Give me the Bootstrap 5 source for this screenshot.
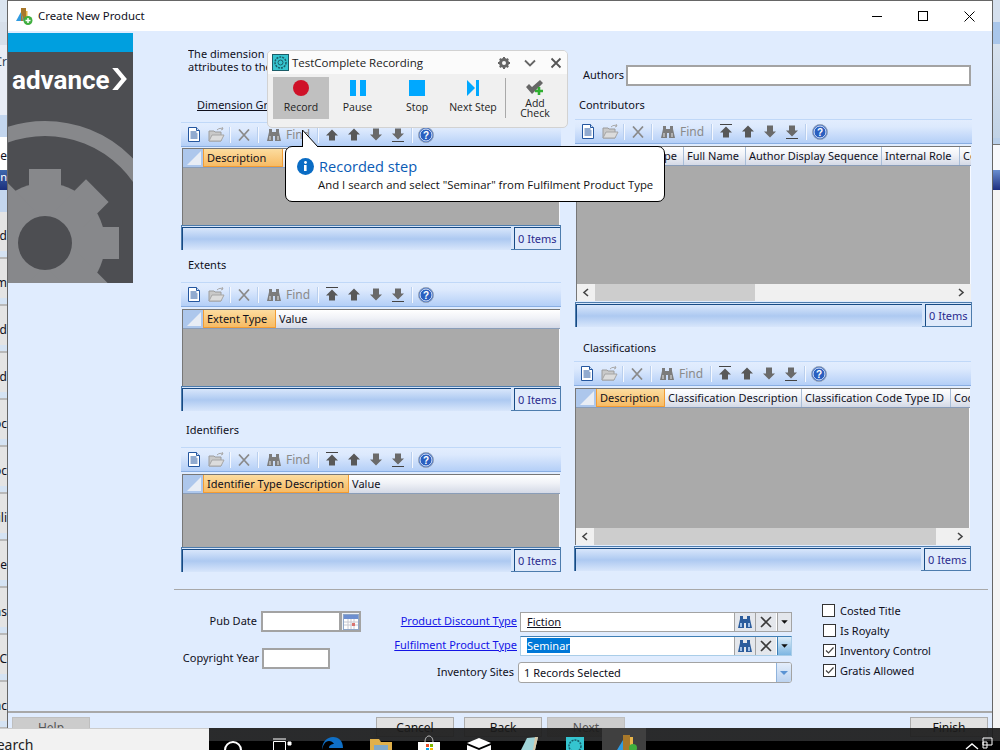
<!DOCTYPE html>
<html lang="en">
<head>
    <meta charset="UTF-8">
    <title>Create New Product</title>
    <link href="https://cdn.jsdelivr.net/npm/bootstrap@5.3.0/dist/css/bootstrap.min.css" rel="stylesheet">
    <style>
        html, body { height: 100%; }
        body {
            width: 1000px; height: 750px; overflow: hidden; position: relative;
            background: #f0f0f0; color: #10101c;
            font-family: "Noto Sans", "Liberation Sans", sans-serif; font-size: 11px; line-height: 13px;
        }
        .desk { height: 750px; }
        /* background app peeking out either side */
        .strip-l { width: 7px; flex: none; overflow: hidden; background: #e4e4e4; }
        .strip-l .sl { height: 47px; border-bottom: 2px solid #b9b9b9; box-shadow: inset 0 -6px 0 #d5e3f3; white-space: nowrap; font-size: 12px; direction: rtl; padding-top: 17px; }
        .strip-l .sl-top { height: 22px; background: #dbe5f0; }
        .strip-l .sl-a { height: 23px; background: #d6dfea; }
        .strip-l .sl-b { height: 70px; background: #e9edf5; padding-top: 10px; font-size: 12px; color: #345; direction: rtl; white-space: nowrap; }
        .strip-l .sl-c { height: 22px; background: #c3d6ee; }
        .strip-l .sl-d { height: 33px; background: #fff; direction: rtl; white-space: nowrap; padding-top: 12px; font-size: 12px; }
        .strip-l .sl-e { height: 20px; background: linear-gradient(#3f68ad, #1b2f7c); color: #fff; direction: rtl; white-space: nowrap; }
        .strip-r { width: 7px; flex: none; background: #f4f4f4; }
        .strip-r .sr1 { height: 22px; background: #d5e0ee; }
        .strip-r .sr2 { height: 22px; background: #a9c6ea; }
        .strip-r .sr3 { height: 94px; background: linear-gradient(#d8e2ee, #c2d3e6); }
        .strip-r .sr4 { height: 7px; background: #b9cfe9; border-bottom: 1px solid #777; }
        .strip-r .sr5 { height: 25px; background: #f8f9fc; }
        .strip-r .sr6 { height: 20px; background: linear-gradient(#6a8fd0, #1e2f80); }

        .win { width: 986px; flex: none; background: #e0ecfe; border: 1px solid #666; border-width: 1px 1px 0 1px; height: 760px; }
        .win-title { height: 30px; background: #fff; font-size: 11.4px; }
        .win-title .wt { margin-left: 5px; margin-top: -2px; }
        .win-icon { margin-left: 8px; }
        .wbtn { width: 46px; height: 30px; }
        .win-body { height: 680px; }

        .brand { width: 125px; height: 250px; margin-top: 2px; background: #4d4e52; flex: none; }
        .brand-top { height: 19px; background: #009fdf; }
        .brand-main { height: 231px; position: relative; overflow: hidden; }
        .brand-art { position: absolute; left: 0; top: 0; }
        .brand-name { position: absolute; left: 4px; top: 14px; color: #fff; font: 700 26px/28px "Roboto", "Liberation Sans", sans-serif; }
        .brand-arrow { position: absolute; left: 104px; top: 16px; }

        .main-area { width: 855px; padding-left: 41px; flex: none; }
        .cols { height: 558px; }
        .col-left { width: 380px; margin-left: 7px; flex: none; }
        .col-right { width: 397px; margin-left: 14px; flex: none; }
        .info-text { padding-top: 16px; margin-left: 7px; width: 370px; white-space: nowrap; overflow: hidden; }
        .dim-link { margin-top: 25px; margin-left: 16px; text-decoration: underline; }
        .lab { height: 13px; }
        .lab-contrib { margin-left: 4px; margin-top: 12px; }
        .lab-ext { margin-left: 7px; margin-top: 8px; }
        .lab-ident { margin-left: 5px; margin-top: 12px; }
        .lab-class { margin-left: 8px; margin-top: 14px; }
        .gap-t11 { margin-top: 11px; }
        .gap-t8 { margin-top: 8px; }
        .gap-t7 { margin-top: 7px; }
        .wide-top .gframe { margin-top: 2px; }
        .auth-row { padding-top: 34px; margin-left: 8px; }
        .auth-lab { padding-bottom: 2px; }
        .auth-row input { width: 345px; margin-left: 2px; }
        .plain-in { height: 21px; border: 2px solid #a3a3a3; background: #fff; display: block; padding: 0; }
        .shift-l { margin-left: -1px; margin-right: 1px; }

        /* grid panel */
        .gtool { height: 25px; background: linear-gradient(#e2edfe, #dce9fd 30%, #b4cff7); border-top: 1px solid #c0d8f8; border-bottom: 1px solid #89aee2; color: #888; font-size: 12px; }
        .gtool svg { display: block; flex: none; }
        .gtool .tsep { width: 1px; height: 16px; background: #f4f8ff; box-shadow: -1px 0 0 #b9cfee; flex: none; }
        .gtool .tfind { width: 26px; margin-left: 5px; flex: none; color: #8a8a8a; }
        .mg5 { margin-left: 5px; } .mg7 { margin-left: 7px; } .mg8 { margin-left: 8px; } .mg10 { margin-left: 10px; } .mg6 { margin-left: 6px; }
        .gframe { margin: 1px 1px 0; border-left: 1px solid #777; }
        .ghead { height: 20px; background: linear-gradient(#fff, #f0f2f7 45%, #d4d9e6); border-top: 1px solid #777; border-bottom: 1px solid #8a9db8; overflow: hidden; }
        .gcorner { width: 20px; flex: none; background: #adc7ec; position: relative; }
        .gcorner::after { content: ""; position: absolute; right: 2px; bottom: 2px; border-style: solid; border-width: 0 0 14px 14px; border-color: transparent transparent #e8edf5 transparent; }
        .gcol { flex: none; padding-left: 3px; line-height: 18px; border-right: 1px solid #a9bed8; white-space: nowrap; overflow: hidden; }
        .gcol-on { background: linear-gradient(#fcdc9f, #f7bb64); border: 1px solid #f29c33; border-top: 0; line-height: 17px; }
        .gcol-last { border-right: 0; }
        .gempty { background: #aaaaaa; border-right: 1px solid #f6f9ff; }
        .gs { height: 17px; background: #f0f0f0; padding: 0 3px; margin-bottom: 1px; }
        .gs-thumb { background: #cdcdcd; height: 100%; }
        .gs-a { width: 15px; flex: none; }
        .h-57 { height: 57px; } .h-53 { height: 53px; } .h-118 { height: 118px; } .h-120 { height: 120px; }
        .gstatus { height: 25px; border: 1px solid #4d7cad; background: #d6e5fa; }
        .gs-main { flex: 1; background: linear-gradient(#d8e6fb, #adc9f1 50%, #d8e6fb); border-top: 1px solid #174a84; border-left: 1px solid #174a84; margin-top: 1px; margin-bottom: -1px; }
        .gs-items { width: 46px; margin-left: 3px; flex: none; background: #dfeafb; border-top: 1px solid #174a84; border-left: 1px solid #174a84; margin-top: 1px; padding-left: 3px; color: #2b2a8e; line-height: 21px; }
        .w-c1 { width: 69px; } .w-c2 { width: 137px; } .w-c3 { width: 149px; }
        .w-p { width: 87px; text-align: right; padding-right: 6px; } .w-f { width: 62px; } .w-a { width: 136px; } .w-r { width: 78px; }
        .w-ext { width: 73px; } .w-id { width: 146px; } .w-d { width: 80px; }

        /* lower form */
        .form-area { border-top: 1px solid #a8a8a8; height: 122px; }
        .fleft { width: 187px; flex: none; }
        .fmid { width: 432px; flex: none; }
        .fr1 { margin-top: 21px; }
        .fr2 { margin-top: 16px; }
        .flab { width: 83px; text-align: right; flex: none; padding-bottom: 2px; }
        .flab2 { width: 85px; }
        .fin1 { width: 80px; margin-left: 4px; }
        .fin2 { width: 68px; margin-left: 3px; }
        .fcal { width: 20px; height: 21px; border: 2px solid #a3a3a3; border-left-width: 1px; background: #eef2f8; padding: 1px; }
        .mlab { width: 156px; text-align: right; flex: none; padding-bottom: 3px; }
        .mlab3 { width: 153px; }
        .mlink { color: #1414e6; text-decoration: underline; }
        .mrow1 { margin-top: 22px; height: 20px; }
        .mrow2 { margin-top: 4px; height: 20px; }
        .mrow3 { margin-top: 6px; height: 21px; }
        .lookup { width: 272px; margin-left: 3px; height: 20px; border: 1px solid #a3a3a3; background: #fff; flex: none; }
        .lookup-on { border-color: #a9cde8; border-top-color: #3f7fb5; }
        .lk-text { flex: 1; padding-left: 6px; line-height: 18px; }
        .lk-u { text-decoration: underline; }
        .lk-sel { background: #0078d7; color: #fff; }
        .lk-btn { width: 21px; flex: none; background: #e4e7ec; border-left: 1px solid #a3a3a3; }
        .lk-btn-d { width: 14px; margin-left: 1px; }
        .lk-btn-on { background: linear-gradient(#dcecf8, #7db6e2); border-left-color: #3f7fb5; }
        .sites { width: 274px; margin-left: 4px; height: 21px; background: #fff; border: 1px solid #a3a3a3; border-radius: 3px; overflow: hidden; flex: none; }
        .sites-t { flex: 1; padding-left: 5px; line-height: 19px; }
        .sites-b { width: 15px; background: linear-gradient(#e4eefb, #bcd3f0); border-left: 1px solid #8fb3dc; }
        .fchecks { margin-left: 29px; margin-top: 10px; }
        .chk-row { height: 20px; }
        .chk-row .form-check-input { width: 13px; height: 13px; margin: 0 5px 0 0; border: 1px solid #333; border-radius: 0; box-shadow: none; flex: none; }
        .chk-row .form-check-input:checked { background-color: #fff; border-color: #333; background-size: 11px 11px; background-image: url("data:image/svg+xml,%3csvg xmlns='http://www.w3.org/2000/svg' viewBox='0 0 11 11'%3e%3cpath d='M2 5.5l2.5 2.5L9.5 2.5' fill='none' stroke='%23444' stroke-width='1.2'/%3e%3c/svg%3e"); }
        .chk-in { margin-left: 1px; }
        .chk-in .form-check-input { margin-right: 4px; }

        .win-foot { border-top: 2px solid #a8a8a8; padding: 4px 4px 0; height: 40px; }
        .btn.wiz { width: 78px; height: 20px; padding: 0; font-size: 12px; line-height: 17px; border-radius: 0; background: #e1e1e1; border: 1px solid #adadad; color: #111; }
        .btn.wiz-off { background: #cccccc; color: #555; border-color: #bfbfbf; opacity: 1; }
        .mg286 { margin-left: 286px; }

        /* recorder */
        .recorder { position: absolute; left: 267px; top: 50px; width: 301px; height: 78px; background: #f0f0f0; border: 1px solid #d2d2d2; border-radius: 5px; font-family: "Open Sans", "Noto Sans", sans-serif; overflow: hidden; }
        .rec-title { height: 23px; background: #fbfbfb; font-size: 11.5px; color: #222; padding-left: 4px; }
        .rec-title span { margin-left: 3px; margin-top: -1px; }
        .rec-ctl { margin-right: 5px; margin-left: 9px; }
        .rec-tools { padding: 3px 0 0 5px; font-size: 10.5px; color: #222; }
        .rec-b { width: 56px; height: 42px; text-align: center; padding-top: 3px; flex: none; }
        .rec-b svg { display: block; margin: 0 auto 5px; }
        .rec-on { background: #c0c0c0; }
        .rec-w57 { width: 57px; }
        .rec-stop { margin-left: 3px; }
        .rec-sep { width: 1px; height: 40px; margin: 1px 0 0 4px; background: #a9a9a9; flex: none; }
        .rec-add { width: 58px; line-height: 10px; }
        .rec-b.rec-add svg { margin-bottom: 1px; }
        .callout { position: absolute; left: 285px; top: 146px; width: 380px; height: 56px; background: #fff; border: 1px solid #000; border-radius: 7px; font-family: "Open Sans", "Noto Sans", sans-serif; padding: 10px 0 0 11px; }
        .call-tail { position: absolute; left: 15px; top: -18px; }
        .call-h { font-size: 14.6px; line-height: 20px; color: #0a5bb5; margin-left: 5px; margin-top: -1px; }
        .call-t { font-size: 11.35px; line-height: 15px; margin: 1px 0 0 21px; color: #111; white-space: nowrap; }

        /* taskbar */
        .taskbar { position: absolute; left: 0; right: 0; top: 728px; height: 22px; background: linear-gradient(rgba(28,28,28,.93) 13px, #000 13px); overflow: hidden; }
        .tsearch { width: 209px; flex: none; background: #f2f2f2; border-top: 1px solid #ccc; color: #222; font-size: 14px; line-height: 20px; padding-top: 6px; }
        .tsearch span { margin-left: -11px; display: block; }
        .tcell { width: 48px; flex: none; display: block; }
        .tcell-on { width: 44px; margin-left: 9px; background: #404040; }
        .ttray { margin-left: auto; margin-right: 6px; }
    </style>
</head>
<body>
    <svg width="0" height="0" class="position-absolute">
        <symbol id="i-doc" viewBox="0 0 12 15"><path d="M.5.5h8l3 3v11H.5z" fill="#fff" stroke="#24569f"/><path d="M8.5.5v3h3" fill="#cfe0f7" stroke="#24569f"/><path d="M2.5 5h6M2.5 7h7M2.5 9h7M2.5 11h7" stroke="#24569f"/></symbol>
        <symbol id="i-open" viewBox="0 0 17 15"><path d="M1 14V4h5l1 1h6v9z" fill="#c9c9c9" stroke="#9c9c9c"/><path d="M1 14l3-6h12l-3 6z" fill="#dcdcdc" stroke="#a6a6a6"/><path d="M9 3c2-2 4-2 6-1l-1-2M15 2l-2 1" fill="none" stroke="#a8a8a8"/></symbol>
        <symbol id="i-x" viewBox="0 0 12 12"><path d="M1 .5l10 11M11 .5L1 11.5" stroke="#8a8a8a" stroke-width="1.7"/></symbol>
        <symbol id="i-bin" viewBox="0 0 14 14"><path d="M2 1h3v3h4V1h3v3l2 9H8V8H6v5H0l2-9z" fill="#7c7c7c"/><path d="M2 8h2v4H2zM10 8h2v4h-2z" fill="#b0b0b0"/></symbol>
        <symbol id="i-top" viewBox="0 0 12 15"><path d="M0 .5h12" stroke="#444"/><path d="M6 2.5l6 6H9v5H3v-5H0z" fill="#585858"/></symbol>
        <symbol id="i-up" viewBox="0 0 12 15"><path d="M6 1.5l6 6H9v6H3v-6H0z" fill="#585858"/></symbol>
        <symbol id="i-dn" viewBox="0 0 12 15"><path d="M6 13.5l6-6H9v-6H3v6H0z" fill="#6a6a6a"/></symbol>
        <symbol id="i-bot" viewBox="0 0 12 15"><path d="M0 14.5h12" stroke="#444"/><path d="M6 12.5l6-6H9v-5H3v5H0z" fill="#6a6a6a"/></symbol>
        <symbol id="i-bin-b" viewBox="0 0 14 14"><path d="M2 1h3v3h4V1h3v3l2 9H8V8H6v5H0l2-9z" fill="#2b5c9c"/><path d="M2 8h2v4H2zM10 8h2v4h-2z" fill="#9fc0e8"/></symbol>
        <symbol id="i-lkx" viewBox="0 0 12 12"><path d="M1 1l10 10M11 1L1 11" stroke="#3a3a3a" stroke-width="1.6"/></symbol>
        <symbol id="i-drop" viewBox="0 0 14 18"><path d="M3.5 7h7L7 11z" fill="#111"/></symbol>
        <symbol id="i-app" viewBox="0 0 17 17"><path d="M0 13L5 4v9z" fill="#2f9be0"/><path d="M5 0h5v13H5z" fill="#a8782a"/><path d="M10 3h1.5v10H10z" fill="#e8b54a"/><path d="M7 13L5 4l3 9z" fill="#4fb4ee"/><circle cx="12" cy="12.5" r="4.5" fill="#3fae3f"/><path d="M12 10v5M9.5 12.5h5" stroke="#fff" stroke-width="1.5"/></symbol>
        <symbol id="i-tc" viewBox="0 0 17 17"><rect x=".5" y=".5" width="16" height="16" fill="#35c4cf" stroke="#1b5d68"/><circle cx="8.5" cy="8.5" r="5.5" fill="none" stroke="#1b5d68" stroke-width="1.5" stroke-dasharray="2 1"/><circle cx="8.5" cy="8.5" r="2.5" fill="none" stroke="#1b5d68"/></symbol>
    </svg>

    <div class="desk d-flex">
        <div class="strip-l">
            <div class="sl-top"></div>
            <div class="sl-a"></div>
            <div class="sl-b">Cr</div>
            <div class="sl-c"></div>
            <div class="sl-d">ne</div>
            <div class="sl-e">an</div>
            <div class="sl-c"></div>
            <div class="sl">d</div>
            <div class="sl">m</div>
            <div class="sl">d</div>
            <div class="sl">rd</div>
            <div class="sl">oc</div>
            <div class="sl">oc</div>
            <div class="sl">ili</div>
            <div class="sl">de</div>
            <div class="sl">ns</div>
            <div class="sl">C</div>
            <div class="sl">ac</div>
        </div>

        <div class="win">
            <div class="win-title d-flex align-items-center">
                <svg class="win-icon" width="17" height="17"><use href="#i-app"/></svg>
                <span class="wt">Create New Product</span>
                <div class="ms-auto d-flex">
                    <div class="wbtn d-flex align-items-center justify-content-center"><svg width="10" height="10"><path d="M0 5.5h10" stroke="#000"/></svg></div>
                    <div class="wbtn d-flex align-items-center justify-content-center"><svg width="10" height="10"><rect x=".5" y=".5" width="9" height="9" fill="none" stroke="#000"/></svg></div>
                    <div class="wbtn d-flex align-items-center justify-content-center"><svg width="11" height="11"><path d="M.5.5l10 10M10.5.5l-10 10" stroke="#000"/></svg></div>
                </div>
            </div>

            <div class="win-body d-flex">
                <div class="brand">
                    <div class="brand-top"></div>
                    <div class="brand-main">
                        <svg class="brand-art" width="125" height="231" viewBox="0 0 125 231">
                            <circle cx="37" cy="191" r="114.5" fill="none" stroke="#87888b" stroke-width="15"/>
                            <g fill="#87888b">
                                <circle cx="37" cy="191" r="60"/>
                                <rect x="21" y="117" width="32" height="148"/>
                                <rect x="21" y="117" width="32" height="148" transform="rotate(45 37 191)"/>
                                <rect x="21" y="117" width="32" height="148" transform="rotate(90 37 191)"/>
                                <rect x="21" y="117" width="32" height="148" transform="rotate(135 37 191)"/>
                            </g>
                            <circle cx="37" cy="191" r="27" fill="#4d4e52"/>
                        </svg>
                        <div class="brand-name">advance</div>
                        <svg class="brand-arrow" width="16" height="22" viewBox="0 0 17 24"><path d="M0 0h6l10 12L6 24H0l10-12z" fill="#fff"/></svg>
                    </div>
                </div>

                <div class="main-area">
                    <div class="cols d-flex">
                        <div class="col-left">
                            <div class="info-text">The dimension groups and lists are used to add values of the<br>attributes to the selected product record for this title</div>
                            <div class="dim-link lab">Dimension Groups</div>
                            <div class="gpanel gap-t11" data-cols="Description:w-d:on|:flex-fill gcol-last" data-h="h-57"></div>
                            <div class="lab lab-ext">Extents</div>
                            <div class="gpanel gap-t11 wide-top" data-cols="Extent Type:w-ext:on|Value:flex-fill gcol-last" data-h="h-57"></div>
                            <div class="lab lab-ident">Identifiers</div>
                            <div class="gpanel gap-t11 wide-top" data-cols="Identifier Type Description:w-id:on|Value:flex-fill gcol-last" data-h="h-53"></div>
                        </div>
                        <div class="col-right">
                            <div class="auth-row d-flex align-items-center"><span class="auth-lab">Authors</span> <input class="plain-in" type="text"></div>
                            <div class="lab lab-contrib">Contributors</div>
                            <div class="gpanel gap-t8 wide-top" data-cols="Contrib Type:w-p|Full Name:w-f|Author Display Sequence:w-a|Internal Role:w-r|Code:flex-fill gcol-last" data-h="h-118" data-scroll="160"></div>
                            <div class="lab lab-class">Classifications</div>
                            <div class="gpanel gap-t7 wide-top shift-l" data-cols="Description:w-c1:on|Classification Description:w-c2|Classification Code Type ID:w-c3|Code:flex-fill gcol-last" data-h="h-120" data-scroll="342"></div>
                        </div>
                    </div>

                    <div class="form-area d-flex">
                        <div class="fleft">
                            <div class="fr1 d-flex align-items-center">
                                <div class="flab">Pub Date</div>
                                <input class="plain-in fin1" type="text">
                                <div class="fcal">
                                    <svg width="16" height="16" viewBox="0 0 16 16"><rect x=".5" y=".5" width="15" height="15" fill="#fff" stroke="#8ea6c8"/><rect x="1" y="1" width="14" height="4" fill="#6d8fd0"/><path d="M1 8h14M1 11h14M5 5v10M8 5v10M11 5v10" stroke="#c8c8d0"/><rect x="9" y="9" width="3" height="3" fill="#d9736f"/></svg>
                                </div>
                            </div>
                            <div class="fr2 d-flex align-items-center">
                                <div class="flab flab2">Copyright Year</div>
                                <input class="plain-in fin2" type="text">
                            </div>
                        </div>
                        <div class="fmid">
                            <div class="mrow1 d-flex align-items-center">
                                <div class="mlab mlink">Product Discount Type</div>
                                <div class="lookup d-flex">
                                    <div class="lk-text"><span class="lk-u">Fiction</span></div>
                                    <div class="lk-btn d-flex align-items-center justify-content-center"><svg width="14" height="14"><use href="#i-bin-b"/></svg></div>
                                    <div class="lk-btn d-flex align-items-center justify-content-center"><svg width="12" height="12"><use href="#i-lkx"/></svg></div>
                                    <div class="lk-btn lk-btn-d"><svg width="13" height="18" class="d-block"><use href="#i-drop"/></svg></div>
                                </div>
                            </div>
                            <div class="mrow2 d-flex align-items-center">
                                <div class="mlab mlink">Fulfilment Product Type</div>
                                <div class="lookup lookup-on d-flex">
                                    <div class="lk-text"><span class="lk-sel">Seminar</span></div>
                                    <div class="lk-btn d-flex align-items-center justify-content-center"><svg width="14" height="14"><use href="#i-bin-b"/></svg></div>
                                    <div class="lk-btn d-flex align-items-center justify-content-center"><svg width="12" height="12"><use href="#i-lkx"/></svg></div>
                                    <div class="lk-btn lk-btn-d lk-btn-on"><svg width="13" height="18" class="d-block"><use href="#i-drop"/></svg></div>
                                </div>
                            </div>
                            <div class="mrow3 d-flex align-items-center">
                                <div class="mlab mlab3">Inventory Sites</div>
                                <div class="sites d-flex">
                                    <div class="sites-t">1 Records Selected</div>
                                    <div class="sites-b d-flex align-items-center justify-content-center"><svg width="10" height="6"><path d="M1 1h8L5 5z" fill="#5b93d3"/></svg></div>
                                </div>
                            </div>
                        </div>
                        <div class="fchecks">
                            <div class="chk-row d-flex align-items-center"><input class="form-check-input" type="checkbox"><span>Costed Title</span></div>
                            <div class="chk-row d-flex align-items-center chk-in"><input class="form-check-input" type="checkbox"><span>Is Royalty</span></div>
                            <div class="chk-row d-flex align-items-center chk-in"><input class="form-check-input" type="checkbox" checked><span>Inventory Control</span></div>
                            <div class="chk-row d-flex align-items-center chk-in"><input class="form-check-input" type="checkbox" checked><span>Gratis Allowed</span></div>
                        </div>
                    </div>
                </div>
            </div>

            <div class="win-foot d-flex">
                <button class="btn wiz wiz-off" type="button">Help</button>
                <button class="btn wiz mg286" type="button">Cancel</button>
                <button class="btn wiz mg10" type="button">Back</button>
                <button class="btn wiz wiz-off mg5" type="button">Next</button>
                <button class="btn wiz ms-auto" type="button">Finish</button>
            </div>
        </div>

        <div class="strip-r">
            <div class="sr1"></div><div class="sr2"></div><div class="sr3"></div><div class="sr4"></div><div class="sr5"></div><div class="sr6"></div>
        </div>
    </div>

    <!-- TestComplete recorder floats over the dialog -->
    <div class="recorder">
        <div class="rec-title d-flex align-items-center">
            <svg width="17" height="17"><use href="#i-tc"/></svg>
            <span>TestComplete Recording</span>
            <div class="ms-auto d-flex align-items-center">
                <svg class="rec-ctl" width="12" height="12" viewBox="0 0 12 12"><circle cx="6" cy="6" r="3.5" fill="none" stroke="#666" stroke-width="3"/><path d="M6 0v2M6 10v2M0 6h2M10 6h2M1.8 1.8l1.4 1.4M8.8 8.8l1.4 1.4M1.8 10.2l1.4-1.4M8.8 3.2l1.4-1.4" stroke="#666" stroke-width="2"/></svg>
                <svg class="rec-ctl" width="12" height="12" viewBox="0 0 12 12"><path d="M1 3.5l5 5 5-5" fill="none" stroke="#666" stroke-width="1.8"/></svg>
                <svg class="rec-ctl" width="12" height="12" viewBox="0 0 12 12"><path d="M1.5 1.5l9 9M10.5 1.5l-9 9" stroke="#555" stroke-width="1.8"/></svg>
            </div>
        </div>
        <div class="rec-tools d-flex">
            <div class="rec-b rec-on"><svg width="16" height="16"><circle cx="8" cy="8" r="8" fill="#cf1128"/></svg>Record</div>
            <div class="rec-b rec-w57"><svg width="16" height="16"><path d="M0 0h6v16H0zM10 0h6v16h-6z" fill="#00a8ff"/></svg>Pause</div>
            <div class="rec-b rec-stop"><svg width="16" height="16"><path d="M0 0h16v16H0z" fill="#00a8ff"/></svg>Stop</div>
            <div class="rec-b"><svg width="12" height="16"><path d="M0 0l8 8-8 8zM9 0h3v16H9z" fill="#00a8ff"/></svg>Next Step</div>
            <div class="rec-sep"></div>
            <div class="rec-b rec-add"><svg width="18" height="17" viewBox="0 0 18 17"><path d="M0 7l3-3 3 3 8-7 3 3L6 14z" fill="#666"/><path d="M13 7v8M9 11h8" stroke="#2fae2f" stroke-width="2.6"/></svg>Add<br>Check</div>
        </div>
    </div>

    <div class="callout">
        <svg class="call-tail" width="20" height="19" viewBox="0 0 20 19"><path d="M1.5 0.5V18.5H17.5z" fill="#fff"/><path d="M1.5 18V1L17 18" fill="none" stroke="#000"/></svg>
        <div class="d-flex align-items-center">
            <svg width="17" height="17" viewBox="0 0 17 17"><circle cx="8.5" cy="8.5" r="8.5" fill="#0a6cc4"/><circle cx="8.5" cy="4.5" r="1.4" fill="#fff"/><path d="M7 7h2.6v6H7z" fill="#fff"/></svg>
            <div class="call-h">Recorded step</div>
        </div>
        <div class="call-t">And I search and select "Seminar" from Fulfilment Product Type</div>
    </div>

    <div class="taskbar d-flex">
        <div class="tsearch"><span>Search</span></div>
        <svg class="tcell" height="22" viewBox="0 0 48 22"><circle cx="24" cy="22" r="8" fill="none" stroke="#fff" stroke-width="2"/></svg>
        <svg class="tcell" height="22" viewBox="0 0 48 22"><path d="M16.5 22V13.5h12V22" fill="none" stroke="#fff"/><path d="M16 11h13M31 14h3v3h-3z" stroke="#fff" fill="#fff"/></svg>
        <svg class="tcell" height="22" viewBox="0 0 48 22"><path d="M17 22c0-8 5-13 11-13s10 4 10 11H24c0-3 3-4 5-4-1-2-3-3-5-3-4 0-6 4-7 9z" fill="#0f6fc6"/></svg>
        <svg class="tcell" height="22" viewBox="0 0 48 22"><path d="M17 11h9l2 3h11v8H17z" fill="#e0b04a"/><rect x="21" y="17" width="14" height="5" fill="#7fa8c8"/></svg>
        <svg class="tcell" height="22" viewBox="0 0 48 22"><path d="M24 14c0-8 8-8 8 0" fill="none" stroke="#ccc"/><rect x="17" y="14" width="22" height="8" fill="#fff"/><rect x="25" y="16" width="3" height="3" fill="#e8502a"/><rect x="29" y="16" width="3" height="3" fill="#7fba00"/><rect x="25" y="20" width="3" height="2" fill="#00a4ef"/><rect x="29" y="20" width="3" height="2" fill="#ffb900"/></svg>
        <svg class="tcell" height="22" viewBox="0 0 48 22"><path d="M18 15l12-5 12 5-12 5z" fill="#fff"/><path d="M18 17l12 5H18zM42 17l-12 5h12z" fill="#fff"/></svg>
        <svg class="tcell" height="22" viewBox="0 0 48 22"><path d="M24 22l6-12 11-1-3 13z" fill="#9fd4d8"/><path d="M38 9l3 0-3 13h-2z" fill="#d8c8a8"/></svg>
        <svg class="tcell" height="22" viewBox="0 0 48 22"><rect x="21" y="9" width="18" height="13" fill="#35c4cf"/><circle cx="30" cy="18" r="6" fill="none" stroke="#17616d" stroke-width="1.6" stroke-dasharray="2 1"/></svg>
        <svg class="tcell tcell-on" height="22" viewBox="0 0 44 22"><path d="M15 22l6-10v10z" fill="#2f9be0"/><path d="M21 7h7v15h-7z" fill="#a8782a"/><path d="M28 9h3v13h-3z" fill="#e8b54a"/><circle cx="31" cy="20" r="4" fill="#3fae3f"/></svg>
        <svg class="ttray" width="30" height="22" viewBox="0 0 30 22"><path d="M2 21l6-5 6 5" fill="none" stroke="#fff" stroke-width="1.4"/><path d="M19 10h9v7h-9zM19 14h4v6h-4z" fill="none" stroke="#fff"/></svg>
    </div>

    <script>
        // every grid panel gets the same toolbar + status bar
        const toolbar = `
            <svg class="mg7" width="12" height="15"><use href="#i-doc"/></svg>
            <svg class="mg8" width="17" height="15"><use href="#i-open"/></svg>
            <div class="tsep mg5"></div>
            <svg class="mg7" width="12" height="12"><use href="#i-x"/></svg>
            <div class="tsep mg8"></div>
            <svg class="mg8" width="14" height="14"><use href="#i-bin"/></svg>
            <div class="tfind">Find</div>
            <div class="tsep mg6"></div>
            <svg class="mg7" width="12" height="15"><use href="#i-top"/></svg>
            <svg class="mg10" width="12" height="15"><use href="#i-up"/></svg>
            <svg class="mg10" width="12" height="15"><use href="#i-dn"/></svg>
            <svg class="mg10" width="12" height="15"><use href="#i-bot"/></svg>
            <div class="tsep mg8"></div>
            <svg class="mg5" width="16" height="16" viewBox="0 0 16 16"><circle cx="8" cy="8" r="7.5" fill="#2a5fc0" stroke="#9aa6b8"/><circle cx="8" cy="8" r="6" fill="none" stroke="#dfe8f8"/><text x="8" y="11.5" text-anchor="middle" font-size="10" font-weight="700" fill="#fff" font-family="Liberation Sans">?</text></svg>`;

        document.querySelectorAll('.gpanel').forEach(function (panel) {
            const cols = panel.dataset.cols.split('|').map(function (c) {
                const [text, cls, on] = c.split(':');
                return `<div class="gcol ${cls} ${on ? 'gcol-on' : ''}">${text}</div>`;
            }).join('');
            let scroll = '';
            if (panel.dataset.scroll) {
                const w = panel.dataset.scroll;
                scroll = `<div class="gs d-flex align-items-center">
                    <svg class="gs-a" height="9" viewBox="0 0 15 9"><path d="M8 1L4 4.5 8 8" fill="none" stroke="#444" stroke-width="1.6"/></svg>
                    <div class="gs-thumb" style="width:${w}px"></div>
                    <svg class="gs-a ms-auto" height="9" viewBox="0 0 15 9"><path d="M6 1l4 3.5L6 8" fill="none" stroke="#444" stroke-width="1.6"/></svg>
                </div>`;
            }
            panel.innerHTML = `
                <div class="gtool d-flex align-items-center">${toolbar}</div>
                <div class="gframe">
                    <div class="ghead d-flex"><div class="gcorner"></div>${cols}</div>
                    <div class="gempty ${panel.dataset.h}"></div>
                    ${scroll}
                </div>
                <div class="gstatus d-flex"><div class="gs-main"></div><div class="gs-items">0 Items</div></div>`;
        });
    </script>
    <script src="https://cdn.jsdelivr.net/npm/bootstrap@5.3.0/dist/js/bootstrap.bundle.min.js"></script>
</body>
</html>
